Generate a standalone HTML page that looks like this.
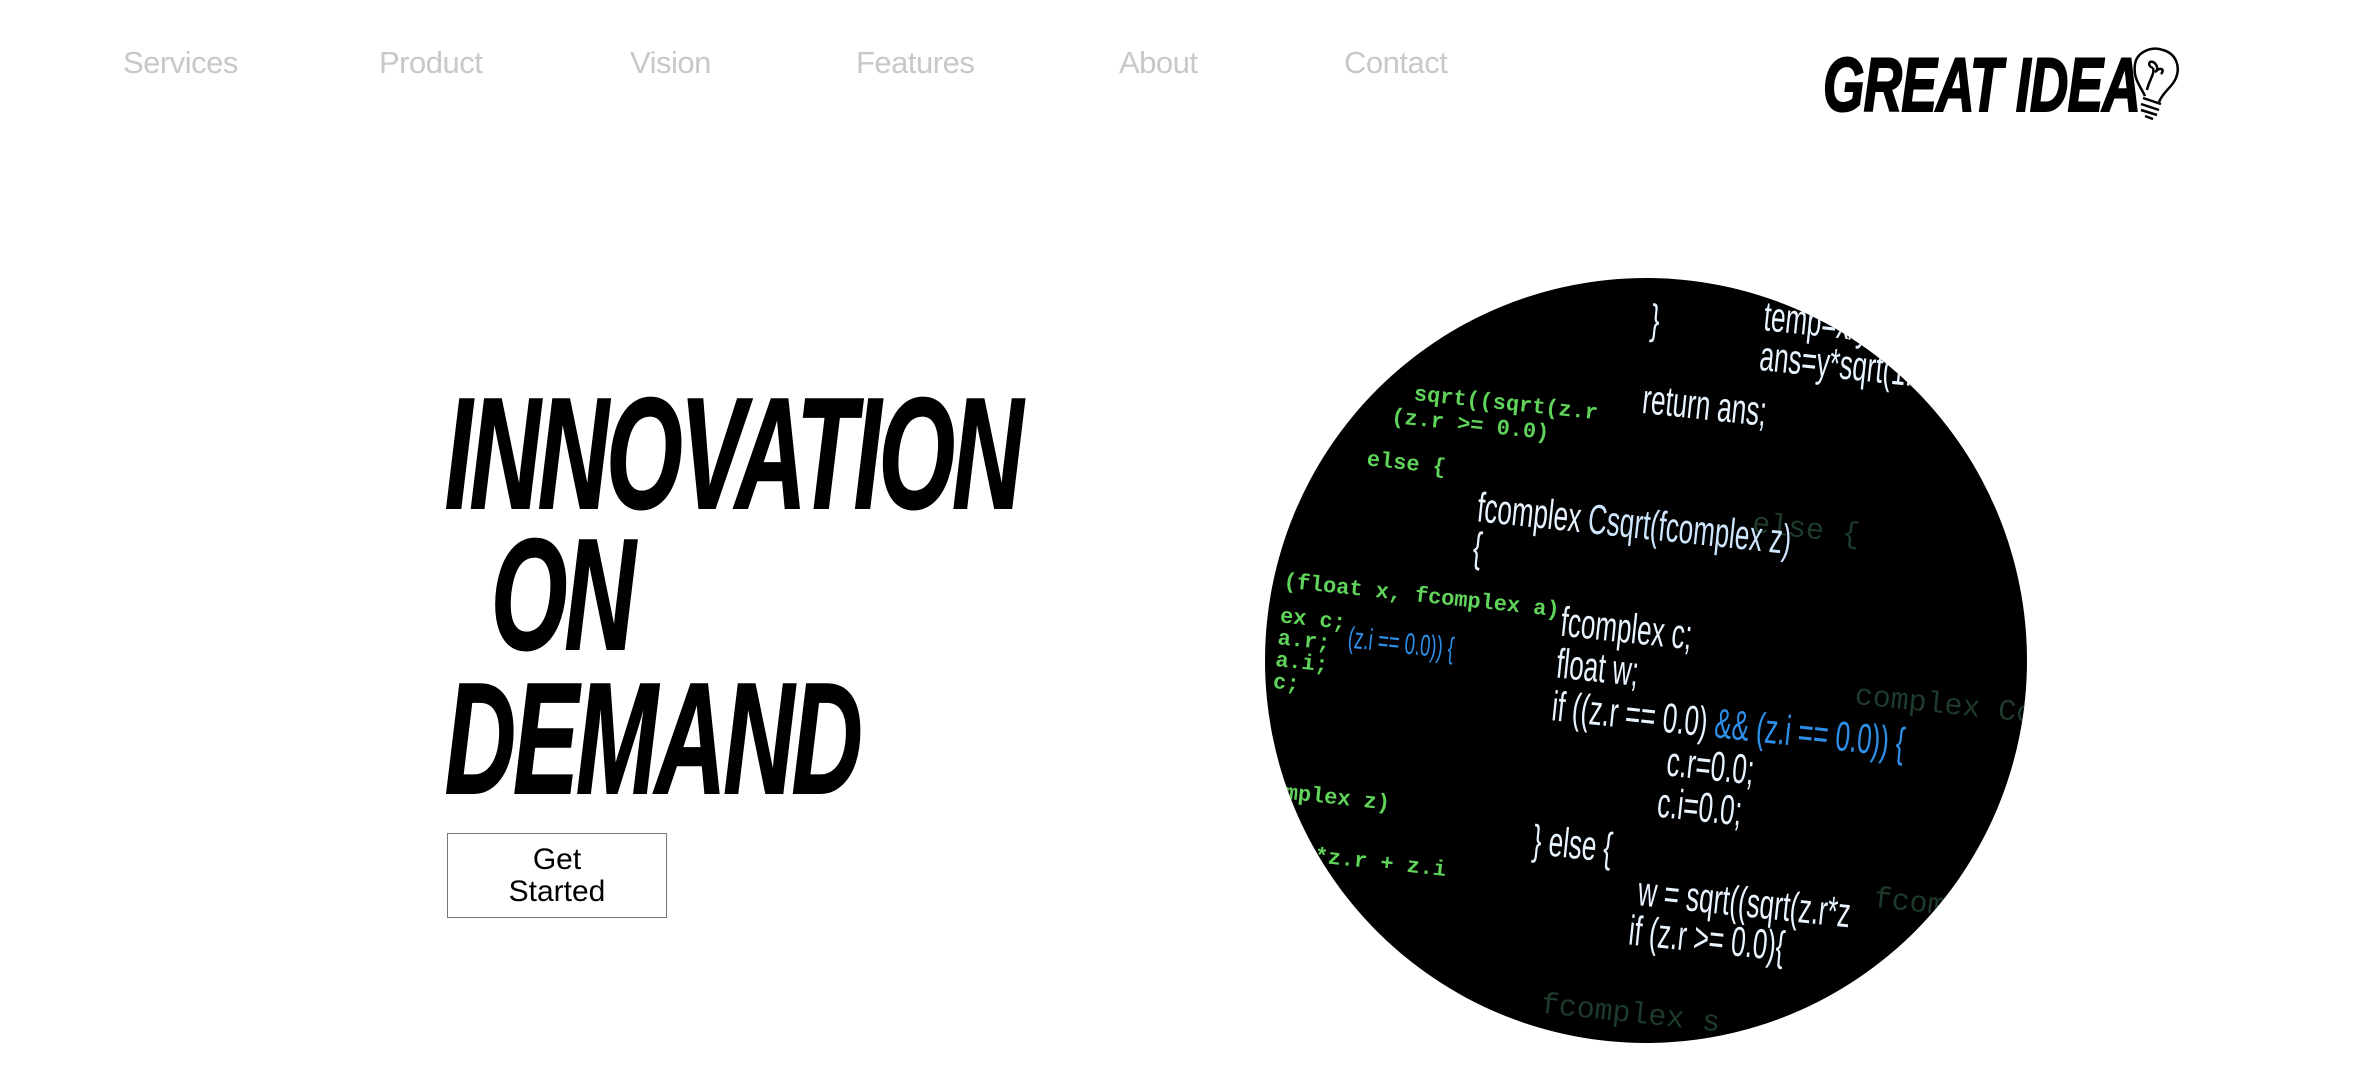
<!DOCTYPE html>
<html><head><meta charset="utf-8"><style>
html,body{margin:0;padding:0;background:#fff;width:2372px;height:1066px;overflow:hidden;position:relative;font-family:"Liberation Sans",sans-serif}
.nav{position:absolute;top:45px;font-size:31px;color:#c8c8c8;letter-spacing:-0.5px}
.h{position:absolute;font-weight:bold;font-style:italic;font-size:158px;line-height:1;color:#000;transform-origin:left top;white-space:nowrap;letter-spacing:-4px;-webkit-text-stroke:2px #000}
.btn{position:absolute;left:447px;top:833px;width:220px;height:85px;border:1.5px solid #777;box-sizing:border-box;text-align:center;font-size:30px;line-height:32px;padding-top:10px;color:#000}
.circ{position:absolute;left:1265px;top:278px;width:762px;height:765px;border-radius:50%;background:#000;overflow:hidden}
.c{position:absolute;white-space:nowrap;font-family:"Liberation Sans",sans-serif;font-size:42px;color:#e8f4ff;transform-origin:left top;line-height:1}
.g{color:#5fd35a;font-family:"Liberation Mono",monospace;font-size:22px;font-weight:bold}
.b{color:#2e8fe8}
.d{color:#1d3a2a;font-family:"Liberation Mono",monospace;font-size:30px}
</style></head><body>
<div class="nav" style="left:123px">Services</div>
<div class="nav" style="left:379px">Product</div>
<div class="nav" style="left:630px">Vision</div>
<div class="nav" style="left:856px">Features</div>
<div class="nav" style="left:1119px">About</div>
<div class="nav" style="left:1344px">Contact</div>

<div style="position:absolute;left:1823px;top:48px;font-weight:bold;font-style:italic;font-size:76px;line-height:1;transform:scaleX(0.7);transform-origin:left top;white-space:nowrap;letter-spacing:-1px;-webkit-text-stroke:2px #000">GREAT IDEA</div>
<svg style="position:absolute;left:2125px;top:44px" width="70" height="76" viewBox="0 0 70 76" fill="none" stroke="#000" stroke-width="2.5">
<path d="M20 52 C14 40 8 34 10 20 C12 8 26 2 38 6 C52 10 56 24 50 36 C46 44 38 48 34 58"/>
<path d="M22 46 C24 36 30 30 28 24 M28 24 C22 22 24 16 28 18 C32 20 34 26 30 28 M30 28 C36 22 40 26 36 30"/>
<path d="M18 54 L36 60 M16 60 L34 66 M16 66 L32 71 M20 72 L28 75"/>
</svg>

<div class="h" style="left:445px;top:375px;transform:scaleX(0.62)">INNOVATION</div>
<div class="h" style="left:491px;top:516px;transform:scaleX(0.62)">ON</div>
<div class="h" style="left:445px;top:660px;transform:scaleX(0.62)">DEMAND</div>

<div class="btn">Get<br>Started</div>

<div class="circ">
<div style="position:absolute;left:30px;top:25px;width:100%;height:100%;transform:rotate(6deg);transform-origin:center">
<div class="c d" style="left:440px;top:200px">else {</div>
<div class="c d" style="left:560px;top:360px">complex Comp</div>
<div class="c d" style="left:600px;top:560px">fcomplex Cor</div>
<div class="c d" style="left:280px;top:700px">fcomplex s</div>
<div class="c" style="left:318px;top:0px;transform:scaleX(.62)">}</div>
<div class="c" style="left:430px;top:-15px;transform:scaleX(.62)">temp=x/y;</div>
<div class="c" style="left:430px;top:25px;transform:scaleX(.62)">ans=y*sqrt(1.0<span class="b">+temp*temp</span></div>
<div class="c" style="left:318px;top:80px;transform:scaleX(.62)">return ans;</div>
<div class="c g" style="left:90px;top:110px">sqrt((sqrt(z.r</div>
<div class="c g" style="left:70px;top:135px">(z.r &gt;= 0.0)</div>
<div class="c g" style="left:50px;top:180px">else {</div>
<div class="c" style="left:165px;top:205px;transform:scaleX(.62)">fcomplex <span style="color:#cfe6ff">Csqrt(fcomplex z)</span></div>
<div class="c" style="left:165px;top:245px;transform:scaleX(.62)">{</div>
<div class="c g" style="left:-20px;top:310px">(float x, fcomplex a)</div>
<div class="c g" style="left:-20px;top:345px">ex c;<br>a.r;<br>a.i;<br>c;</div>
<div class="c b" style="left:50px;top:355px;font-size:30px;transform:scaleX(.62)">(z.i == 0.0)) {</div>
<div class="c" style="left:260px;top:310px;transform:scaleX(.62)">fcomplex c;</div>
<div class="c" style="left:260px;top:352px;transform:scaleX(.62)">float w;</div>
<div class="c" style="left:260px;top:395px;transform:scaleX(.62)">if ((z.r == 0.0) <span class="b">&amp;&amp; (z.i == 0.0)) {</span></div>
<div class="c" style="left:380px;top:438px;transform:scaleX(.62)">c.r=0.0;</div>
<div class="c" style="left:375px;top:480px;transform:scaleX(.62)">c.i=0.0;</div>
<div class="c g" style="left:-10px;top:520px">omplex z)</div>
<div class="c g" style="left:0px;top:580px">z.r*z.r + z.i</div>
<div class="c" style="left:255px;top:530px;transform:scaleX(.62)">} else {</div>
<div class="c" style="left:365px;top:570px;transform:scaleX(.62)">w = sqrt((sqrt(z.r*z</div>
<div class="c" style="left:360px;top:610px;transform:scaleX(.62)">if (z.r &gt;= 0.0){</div>
</div>
</div>
</body></html>
